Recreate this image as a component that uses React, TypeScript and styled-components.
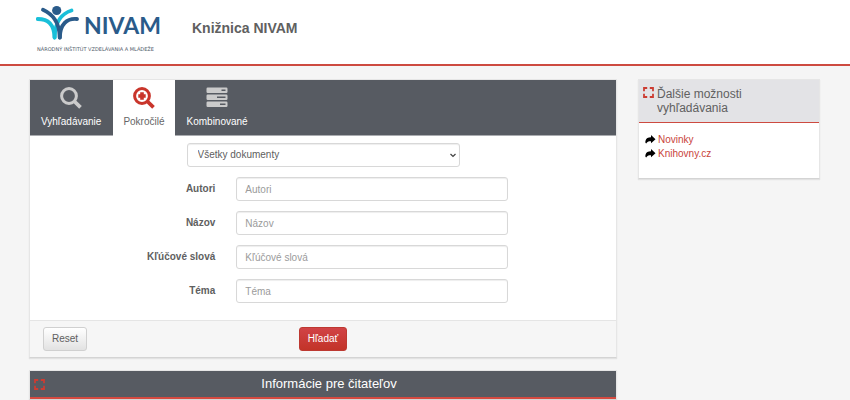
import React from "react";
import styled, { createGlobalStyle } from "styled-components";

const GlobalStyle = createGlobalStyle`
  *, *::before, *::after { box-sizing: border-box; }
  html { background: #f5f5f5; }
  body {
    margin: 0;
    color: #606060;
    font: 10px/14px "Liberation Sans", Arial, sans-serif;
    overflow: hidden;
  }
  button, input, select { font: inherit; color: inherit; }
`;

const Header = styled.header`
  display: flex;
  align-items: flex-start;
  gap: 28px;
  height: 66px;
  padding: 4px 36px 0;
  background: #fff;
  border-bottom: 2px solid #cd4a40;
`;

const Logo = styled.svg`
  display: block;
  flex: none;
  width: 128px;
  height: 50px;
`;

const SiteTitle = styled.h1`
  margin: 14px 0 0;
  font-size: 14px;
  line-height: 20px;
`;

const Page = styled.div`
  display: grid;
  grid-template-columns: 588fr 182fr;
  align-items: start;
  gap: 21px;
  padding: 13px 30px 0 29px;
`;

const Main = styled.main`
  display: grid;
  gap: 12px;
`;

const Panel = styled.section`
  background: #fff;
  border: 1px solid #e6e6e6;
  border-bottom-color: #d4d4d4;
  box-shadow: 0 1px 1px #e2e2e2;
`;

const Tabs = styled.nav`
  display: flex;
  background: #575b62;
  border-bottom: 1px solid #aaacb0;
`;

const Tab = styled.button<{ $active?: boolean }>`
  display: flex;
  flex-direction: column;
  align-items: center;
  gap: 6px;
  height: 56px;
  margin: ${(p) => (p.$active ? "0 1px -1px" : "0 0 -1px")};
  padding: ${(p) => (p.$active ? "7px 10px 0" : "7px 11px 0")};
  border: 0;
  background: ${(p) => (p.$active ? "#fff" : "transparent")};
  color: ${(p) => (p.$active ? "#666" : "#fff")};
  line-height: 14px;
  cursor: pointer;

  svg {
    width: 22px;
    height: 22px;
    color: ${(p) => (p.$active ? "#c9352b" : "#cbcbcb")};
  }
`;

const Fields = styled.div`
  display: grid;
  gap: 10px;
  padding: 7px 0 17px;
`;

const SelectRow = styled.div`
  margin-left: 25%;
  width: 50%;
  padding: 0 10px;
`;

const FieldRow = styled.div`
  display: grid;
  grid-template-columns: 33.333% 50%;
  align-items: center;
`;

const Label = styled.label`
  padding-right: 10px;
  text-align: right;
  font-weight: bold;
`;

const InputCell = styled.div`
  padding: 0 10px 0 11px;
`;

const Input = styled.input`
  display: block;
  width: 100%;
  height: 24px;
  padding: 0 8px;
  border: 1px solid #d8d8d8;
  border-radius: 3px;
  background: #fff;
  box-shadow: inset 0 1px 1px #eee;
  &::placeholder { color: #9b9b9b; opacity: 1; }
`;

const SelectWrap = styled.div`
  position: relative;
  svg {
    position: absolute;
    right: 4px;
    top: 10px;
    width: 6px;
    height: 5px;
    pointer-events: none;
  }
`;

const Select = styled.select`
  display: block;
  width: 100%;
  height: 24px;
  padding: 0 10px;
  appearance: none;
  border: 1px solid #d8d8d8;
  border-radius: 3px;
  background: #fff;
  box-shadow: inset 0 1px 1px #eee;
`;

const Actions = styled.div`
  display: grid;
  grid-template-columns: 1fr auto 1fr;
  padding: 6px 13px;
  background: #f6f6f6;
  border-top: 1px solid #e5e5e5;
`;

const Button = styled.button<{ $primary?: boolean }>`
  justify-self: start;
  height: 24px;
  padding: 0 8px;
  border: 1px solid ${(p) => (p.$primary ? "#bd3931" : "#d0d0d0")};
  border-radius: 3px;
  background: ${(p) =>
    p.$primary
      ? "linear-gradient(#d14346, #c23328)"
      : "linear-gradient(#fff, #e2e2e2)"};
  color: ${(p) => (p.$primary ? "#fff" : "#606060")};
  cursor: pointer;
`;

const InfoHeading = styled.h2`
  display: grid;
  grid-template-columns: 12px 1fr;
  align-items: center;
  height: 28px;
  margin: 0;
  padding: 0 4px;
  background: #575b62;
  border-bottom: 2px solid #d54a40;
  color: #fff;
  font-size: 13px;
  font-weight: normal;
  text-align: center;
`;

const SideHeading = styled.h2`
  display: flex;
  gap: 3px;
  height: 43px;
  margin: 0;
  padding: 7px 4px 0;
  background: #e3e3e6;
  border-bottom: 1px solid #cd4a40;
  font-size: 12px;
  line-height: 14px;
  font-weight: normal;
`;

const Corners = styled.svg`
  display: block;
  flex: none;
  width: 11px;
  height: 11px;
`;

const Links = styled.ul`
  margin: 0;
  padding: 10px 6px 17px;
  list-style: none;
`;

const LinkItem = styled.li`
  display: flex;
  align-items: center;
  gap: 2px;
  svg { width: 11px; height: 10px; }
  a { color: #c9443b; text-decoration: none; }
`;

function CornerIcon() {
  return (
    <Corners viewBox="0 0 11 11" fill="none" stroke="#cc3c32" strokeWidth="1.8" aria-hidden="true">
      <path d="M1 4.2V1h3.2M6.8 1H10v3.2M10 6.8V10H6.8M4.2 10H1V6.8" />
    </Corners>
  );
}

function SearchIcon({ plus }: { plus?: boolean }) {
  return (
    <svg viewBox="0 0 22 22" fill="none" stroke="currentColor" aria-hidden="true">
      <circle cx="9" cy="9" r="7.4" strokeWidth="3" />
      <path d="M14.5 14.5l6 5.8" strokeWidth="3.8" />
      {plus && <path d="M9 5.3v7.4M5.3 9h7.4" strokeWidth="3.6" />}
    </svg>
  );
}

function TasksIcon() {
  return (
    <svg viewBox="0 0 22 22" aria-hidden="true">
      <g fill="currentColor">
        <rect x="0.5" y="0.5" width="21" height="5.5" rx="1.2" />
        <rect x="0.5" y="7.5" width="21" height="5.5" rx="1.2" />
        <rect x="0.5" y="14.5" width="21" height="5.5" rx="1.2" />
      </g>
      <path d="M15.5 3.2h4M11 10.2h8.5M14 17.2h5.5" stroke="#575b62" strokeWidth="1.4" />
    </svg>
  );
}

function ShareIcon() {
  return (
    <svg viewBox="0 0 11 10" aria-hidden="true">
      <path d="M6 0L10.5 4.2 6 8.2V6.3C3.6 6.2 2.3 6.8 1.2 8.4 0.2 8.4 0.2 7 0.6 5.6 1.2 3.2 3 2.3 6 2.3z" fill="#000" />
    </svg>
  );
}

function NivamLogo() {
  return (
    <Logo viewBox="0 0 128 50" role="img" aria-label="NIVAM">
      <g fill="none" strokeLinecap="round" strokeWidth="3.9">
        <path d="M1.8 15C11 15 18 19 18.6 33.5" stroke="#19bfd9" />
        <path d="M35.5 6.5C27 9 19 17 18.6 33.5" stroke="#19bfd9" />
        <path d="M7 5.8C16 10 23.5 17 23.8 33.5" stroke="#2a5b8a" />
        <path d="M41 15C31 14 24 20 23.8 33.5" stroke="#2a5b8a" />
      </g>
      <circle cx="20.7" cy="6.5" r="4.6" fill="#2a5b8a" />
      <text x="48" y="30" fill="#2a5b8a" fontFamily="Lato, sans-serif" fontSize="23" fontWeight="700">
        NIVAM
      </text>
      <text x="1" y="47" fill="#4c5868" fontFamily="'DejaVu Sans', sans-serif" fontSize="5">
        NÁRODNÝ INŠTITÚT VZDELÁVANIA A MLÁDEŽE
      </text>
    </Logo>
  );
}

const fields = [
  { id: "autori", label: "Autori" },
  { id: "nazov", label: "Názov" },
  { id: "klucove-slova", label: "Kľúčové slová" },
  { id: "tema", label: "Téma" },
];

export default function App() {
  return (
    <>
      <GlobalStyle />
      <Header>
        <NivamLogo />
        <SiteTitle>Knižnica NIVAM</SiteTitle>
      </Header>
      <Page>
        <Main>
          <Panel>
            <Tabs>
              <Tab type="button"><SearchIcon />Vyhľadávanie</Tab>
              <Tab type="button" $active><SearchIcon plus />Pokročilé</Tab>
              <Tab type="button"><TasksIcon />Kombinované</Tab>
            </Tabs>
            <form onSubmit={(e) => e.preventDefault()}>
              <Fields>
                <SelectRow>
                  <SelectWrap>
                    <Select aria-label="Všetky dokumenty">
                      <option>Všetky dokumenty</option>
                    </Select>
                    <svg viewBox="0 0 6 5" fill="none" stroke="#444" strokeWidth="1.3" aria-hidden="true">
                      <path d="M0.5 1L3 3.4 5.5 1" />
                    </svg>
                  </SelectWrap>
                </SelectRow>
                {fields.map((f) => (
                  <FieldRow key={f.id}>
                    <Label htmlFor={f.id}>{f.label}</Label>
                    <InputCell>
                      <Input id={f.id} type="text" placeholder={f.label} />
                    </InputCell>
                  </FieldRow>
                ))}
              </Fields>
              <Actions>
                <Button type="reset">Reset</Button>
                <Button type="submit" $primary>Hľadať</Button>
              </Actions>
            </form>
          </Panel>
          <Panel>
            <InfoHeading>
              <CornerIcon />
              <span>Informácie pre čitateľov</span>
            </InfoHeading>
          </Panel>
        </Main>
        <Panel as="aside">
          <SideHeading>
            <CornerIcon />
            <span>Ďalšie možnosti vyhľadávania</span>
          </SideHeading>
          <Links>
            <LinkItem><ShareIcon /><a href="#novinky">Novinky</a></LinkItem>
            <LinkItem><ShareIcon /><a href="#knihovny">Knihovny.cz</a></LinkItem>
          </Links>
        </Panel>
      </Page>
    </>
  );
}
